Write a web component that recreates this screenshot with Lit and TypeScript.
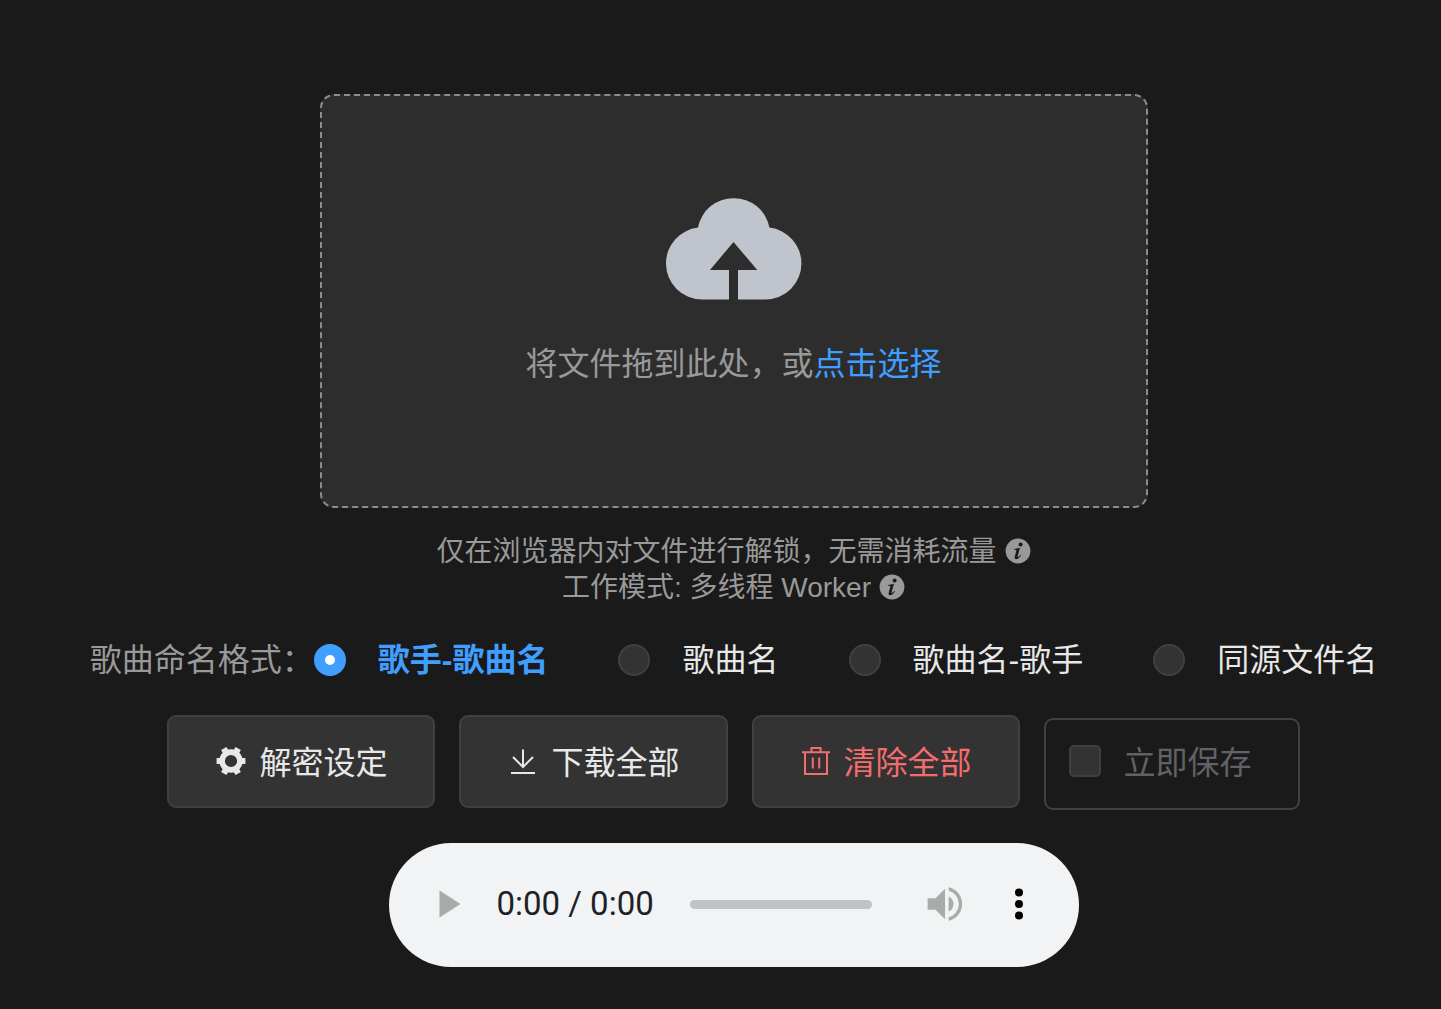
import { LitElement, html, css, svg } from "lit";
import { customElement, property, state } from "lit/decorators.js";

type IconName = "cloud" | "info" | "gear" | "download" | "trash" | "play" | "volume" | "more";

const GEAR_TEETH = [0, 60, 120, 180, 240, 300];

const ICONS = {
  cloud: {
    width: 136,
    height: 102,
    body: svg`<path d="M36 101.5A36 36 0 0 1 0 65.5A36 36 0 0 1 32 29.6A35.8 35.8 0 0 1 67.7 0.2A35.8 35.8 0 0 1 103.4 29.6A36 36 0 0 1 135.4 65.5A36 36 0 0 1 99.5 101.5H72V72H91.3L67.5 44L44 72H63V101.5Z" fill="currentColor" />`,
  },
  info: {
    width: 26,
    height: 26,
    body: svg`
      <circle cx="13" cy="13" r="12.4" fill="currentColor" />
      <circle cx="15.6" cy="6.4" r="2" fill="var(--page)" />
      <path d="M9.2 10.9Q11.6 10.5 15 9.7L12.6 18.2Q12.4 19.4 13.4 18.8Q14.6 18 15.4 16.7L16 17.2Q13.6 21.2 11 21.2Q9 21 9.8 18.4L11.4 12.6Q11.6 11.5 9.1 11.7Z" fill="var(--page)" />`,
  },
  gear: {
    width: 32,
    height: 32,
    body: svg`
      <circle cx="16" cy="16" r="8.9" fill="none" stroke="currentColor" stroke-width="5.6" />
      ${GEAR_TEETH.map(
        (angle) => svg`<path d="M24 10.5L27.2 12.9H30.4V19.1H27.2L24 21.5Z" fill="currentColor" transform="rotate(${angle} 16 16)" />`
      )}`,
  },
  download: {
    width: 32,
    height: 32,
    body: svg`<path d="M16 4.5V22M6 12L16 22L26 12M4 28H28" fill="none" stroke="currentColor" stroke-width="2" />`,
  },
  trash: {
    width: 32,
    height: 32,
    body: svg`<path d="M2 7.2H30M11.5 7V3H20.5V7M5 7V29H27V7M12.8 12.5V23.5M19.2 12.5V23.5" fill="none" stroke="currentColor" stroke-width="2" />`,
  },
  play: {
    width: 22,
    height: 28,
    body: svg`<path d="M0.5 0.5L21.5 14L0.5 27.5Z" fill="currentColor" />`,
  },
  volume: {
    width: 36,
    height: 36,
    body: svg`
      <path d="M0.6 12.2H8.6L18 2.8V33.2L8.6 23.8H0.6Z" fill="currentColor" />
      <path d="M21.6 10.4A8.4 8.4 0 0 1 21.6 25.6Z" fill="currentColor" />
      <path d="M21.6 1.2A17.2 17.2 0 0 1 21.6 34.8V31.2A13.6 13.6 0 0 0 21.6 4.8Z" fill="currentColor" />`,
  },
  more: {
    width: 8,
    height: 32,
    body: svg`
      <circle cx="4" cy="4.5" r="4" fill="currentColor" />
      <circle cx="4" cy="16" r="4" fill="currentColor" />
      <circle cx="4" cy="27.5" r="4" fill="currentColor" />`,
  },
};

@customElement("app-icon")
class AppIcon extends LitElement {
  @property() name: IconName = "info";

  static styles = css`
    :host { display: inline-flex; flex: none; }
    .icon { display: block; }
  `;

  render() {
    const { width, height, body } = ICONS[this.name];
    return html`<svg class="icon" width=${width} height=${height} viewBox="0 0 ${width} ${height}" aria-hidden="true">${body}</svg>`;
  }
}

@customElement("audio-bar")
class AudioBar extends LitElement {
  static styles = css`
    :host { display: block; width: 100%; max-width: 690px; }
    .bar {
      box-sizing: border-box;
      display: flex;
      align-items: center;
      height: 124px;
      padding: 0 56px 2px 50px;
      border-radius: 62px;
      background: #f1f3f4;
      color: #a9abab;
    }
    .control {
      display: inline-flex;
      padding: 0;
      border: 0;
      background: none;
      color: inherit;
      font: inherit;
    }
    .time {
      margin: 0 36px;
      color: #202124;
      font: 400 33px/40px Roboto, "Liberation Sans", sans-serif;
      white-space: nowrap;
    }
    .track {
      appearance: none;
      flex: 1;
      min-width: 0;
      height: 9px;
      margin: 0;
      border-radius: 5px;
      background: #c1c2c3;
    }
    .track::-webkit-slider-thumb { appearance: none; width: 0; height: 0; }
    .volume { margin: 0 52px 0 55px; }
    .more { color: #000; }
  `;

  render() {
    return html`
      <div class="bar">
        <button class="control" aria-label="播放"><app-icon name="play"></app-icon></button>
        <span class="time">0:00 / 0:00</span>
        <input class="track" type="range" min="0" max="100" value="0" aria-label="进度" />
        <button class="control volume" aria-label="音量"><app-icon name="volume"></app-icon></button>
        <button class="control more" aria-label="更多"><app-icon name="more"></app-icon></button>
      </div>
    `;
  }
}

const FORMATS = ["歌手-歌曲名", "歌曲名", "歌曲名-歌手", "同源文件名"];

@customElement("app-root")
class AppRoot extends LitElement {
  @state() private format = FORMATS[0];

  static styles = css`
    :host {
      --page: #1a1a1a;
      --surface: #333;
      --line: #404040;
      --muted: #999;
      --text: #e8e8e8;
      --accent: #409eff;
      display: block;
      box-sizing: border-box;
      min-height: 100vh;
      padding: 94px 0 40px 26px;
      background: var(--page);
      color: var(--text);
      font: 32px/44px "Liberation Sans", "Noto Sans CJK SC", sans-serif;
    }
    .page { display: flex; flex-direction: column; align-items: center; }
    .label { padding-top: 4px; line-height: 40px; }
    .upload {
      box-sizing: border-box;
      display: flex;
      flex-direction: column;
      align-items: center;
      gap: 40px;
      width: 100%;
      max-width: 828px;
      padding: 102px 24px 122px;
      border: 2px dashed #8c8c8c;
      border-radius: 14px;
      background: #2d2d2d;
      color: var(--muted);
      cursor: pointer;
    }
    .upload app-icon { color: #c0c4cc; }
    .pick { color: var(--accent); }
    .file {
      position: absolute;
      width: 1px;
      height: 1px;
      opacity: 0;
    }
    .tips {
      margin: 26px 0 0;
      color: var(--muted);
      font-size: 28px;
      line-height: 36px;
      text-align: center;
    }
    .tip { display: flex; align-items: center; justify-content: center; gap: 8px; }
    .tip app-icon { margin-bottom: 2px; }
    .formats {
      display: flex;
      flex-wrap: wrap;
      align-items: center;
      justify-content: center;
      margin: 32px 0 33px;
      white-space: nowrap;
    }
    .caption { color: var(--muted); }
    .choices { display: flex; flex-wrap: wrap; gap: 0 70px; }
    .choice { display: flex; align-items: center; gap: 32px; }
    .radio, .check {
      appearance: none;
      box-sizing: border-box;
      flex: none;
      width: 32px;
      height: 32px;
      margin: 0;
      border: 2px solid var(--line);
      background: var(--surface);
    }
    .radio { border-radius: 50%; }
    .radio:checked { border: 11px solid var(--accent); background: #fff; }
    .radio:checked + .name { color: var(--accent); font-weight: 700; }
    .check { border-radius: 5px; }
    .actions {
      display: flex;
      flex-wrap: wrap;
      align-items: baseline;
      justify-content: center;
      gap: 24px;
    }
    .action {
      display: inline-flex;
      align-items: center;
      gap: 12px;
      padding: 22px 46px 23px;
      border: 2px solid var(--line);
      border-radius: 9px;
      background: var(--surface);
      color: var(--text);
      font: inherit;
      white-space: nowrap;
    }
    .danger { color: #f56c6c; }
    .instant {
      display: flex;
      align-items: center;
      gap: 23px;
      padding: 19px 46px 25px 23px;
      border: 2px solid var(--line);
      border-radius: 9px;
      color: #606266;
      white-space: nowrap;
    }
    audio-bar { margin-top: 33px; }
  `;

  render() {
    return html`
      <main class="page">
        <label class="upload">
          <app-icon name="cloud"></app-icon>
          <span class="label">将文件拖到此处，或<span class="pick">点击选择</span></span>
          <input class="file" type="file" multiple />
        </label>

        <div class="tips">
          <div class="tip">仅在浏览器内对文件进行解锁，无需消耗流量<app-icon name="info"></app-icon></div>
          <div class="tip">工作模式: 多线程 Worker<app-icon name="info"></app-icon></div>
        </div>

        <div class="formats" role="radiogroup" aria-labelledby="format-caption">
          <span class="caption" id="format-caption">歌曲命名格式：</span>
          <div class="choices">
            ${FORMATS.map(
              (name) => html`
                <label class="choice">
                  <input
                    class="radio"
                    type="radio"
                    name="format"
                    .checked=${this.format === name}
                    @change=${() => (this.format = name)}
                  />
                  <span class="name">${name}</span>
                </label>
              `
            )}
          </div>
        </div>

        <div class="actions">
          <button class="action"><app-icon name="gear"></app-icon><span class="label">解密设定</span></button>
          <button class="action"><app-icon name="download"></app-icon><span class="label">下载全部</span></button>
          <button class="action danger"><app-icon name="trash"></app-icon><span class="label">清除全部</span></button>
          <label class="instant"><input class="check" type="checkbox" /><span class="label">立即保存</span></label>
        </div>

        <audio-bar></audio-bar>
      </main>
    `;
  }
}
